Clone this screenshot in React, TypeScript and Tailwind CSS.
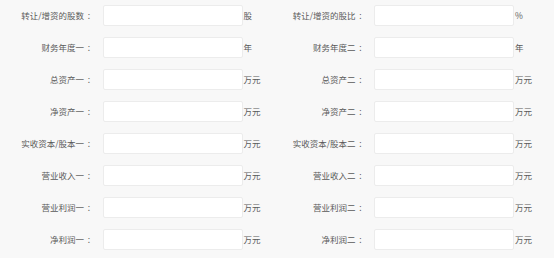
const rows: [string, string, string, string][] = [
  ["转让/增资的股数", "股", "转让/增资的股比", "%"],
  ["财务年度一", "年", "财务年度二", "年"],
  ["总资产一", "万元", "总资产二", "万元"],
  ["净资产一", "万元", "净资产二", "万元"],
  ["实收资本/股本一", "万元", "实收资本/股本二", "万元"],
  ["营业收入一", "万元", "营业收入二", "万元"],
  ["营业利润一", "万元", "营业利润二", "万元"],
  ["净利润一", "万元", "净利润二", "万元"],
];

function Field({ label, unit }: { label: string; unit: string }) {
  return (
    <div className="flex items-center h-[21px]">
      <label className="w-[94px] shrink-0 flex justify-end items-center whitespace-nowrap">
        <span>{label}</span>
        <span className="w-[10px] text-center">:</span>
      </label>
      <input
        type="text"
        className="ml-[8.5px] w-[140px] h-[21px] shrink-0 bg-white border border-[#ececec] rounded-[2px] outline-none"
      />
      <span className="ml-px whitespace-nowrap">{unit}</span>
    </div>
  );
}

export default function App() {
  return (
    <div
      className="w-[554px] h-[258px] bg-[#f8f8f8] text-[#5a5a5a] text-[8.5px] pt-[5px] overflow-hidden"
      style={{ fontFamily: '"Noto Sans CJK SC", "Noto Sans", sans-serif' }}
    >
      <div className="flex flex-col gap-[11px]">
        {rows.map(([l1, u1, l2, u2]) => (
          <div key={l1} className="grid grid-cols-[271.5px_1fr]">
            <Field label={l1} unit={u1} />
            <Field label={l2} unit={u2} />
          </div>
        ))}
      </div>
    </div>
  );
}
